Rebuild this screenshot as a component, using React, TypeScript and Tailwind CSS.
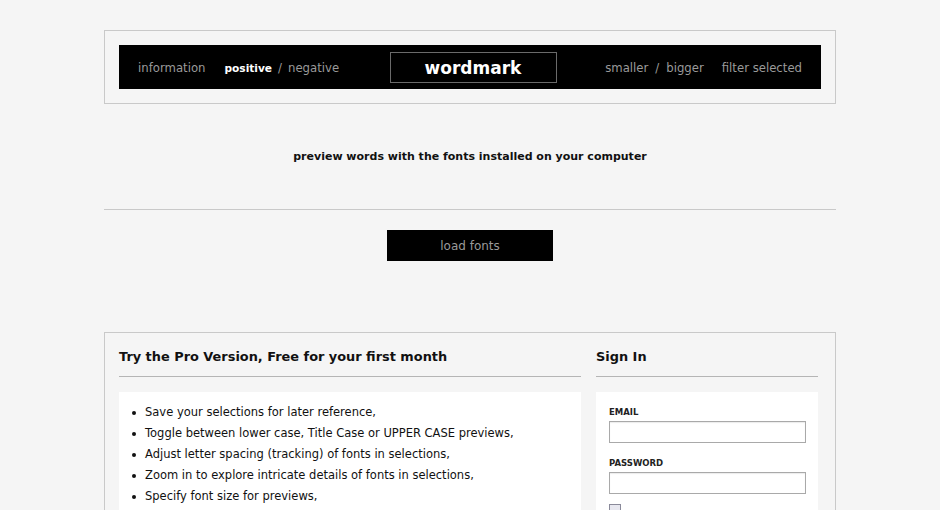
import React from "react";

const font = { fontFamily: '"DejaVu Sans", Verdana, sans-serif' };

export default function App() {
  const items = [
    "Save your selections for later reference,",
    "Toggle between lower case, Title Case or UPPER CASE previews,",
    "Adjust letter spacing (tracking) of fonts in selections,",
    "Zoom in to explore intricate details of fonts in selections,",
    "Specify font size for previews,",
  ];
  return (
    <div className="min-h-screen w-full bg-[#f5f5f5] pt-[30px] text-[#111]" style={font}>
      <div className="mx-auto w-[732px]">
        {/* top box */}
        <div className="border border-[#c9c9c9] p-[14px]">
          <div className="grid h-[44px] grid-cols-[1fr_auto_1fr] items-center bg-black px-[19px] text-[11.7px]">
            <div className="flex items-center pt-[3px]">
              <span className="text-[#9a9a9a]">information</span>
              <span className="ml-[19px] font-bold text-white text-[10.6px]">positive</span>
              <span className="mx-[6px] text-[#9a9a9a]">/</span>
              <span className="text-[#9a9a9a]">negative</span>
            </div>
            <div className="flex h-[31px] w-[167px] translate-x-[3px] items-center justify-center border border-[#6a6a6a] pt-[3px]">
              <span className="text-[17px] font-bold text-white">wordmark</span>
            </div>
            <div className="flex items-center justify-end pt-[3px]">
              <span className="text-[#9a9a9a]">smaller</span>
              <span className="mx-[7px] text-[#9a9a9a]">/</span>
              <span className="text-[#9a9a9a]">bigger</span>
              <span className="ml-[18px] text-[#9a9a9a]">filter selected</span>
            </div>
          </div>
        </div>

        <p className="mt-[46px] text-center text-[11px] font-bold leading-[14px] text-[#111]">
          preview words with the fonts installed on your computer
        </p>

        <div className="mt-[45px] h-px bg-[#c9c9c9]" />

        <div className="mt-[20px] flex justify-center">
          <button className="flex h-[31px] w-[166px] items-center justify-center bg-black text-[12px] text-[#9a9a9a]">
            load fonts
          </button>
        </div>

        {/* bottom box */}
        <div className="mt-[71px] border border-[#c9c9c9] pl-[14px] pr-[16px] pt-[14px]">
          <div className="flex gap-[15px]">
            <div className="w-[462px]">
              <h2 className="border-b border-[#b5b5b5] pb-[9px] text-[12.9px] font-bold leading-[20px]">
                Try the Pro Version, Free for your first month
              </h2>
              <div className="mt-[15px] bg-white pl-[13px] pt-[10px] pb-[20px]">
                <ul>
                  {items.map((t) => (
                    <li key={t} className="flex items-center text-[11.5px] leading-[21px]">
                      <span className="mr-[9px] inline-block h-[4px] w-[4px] rounded-full bg-[#111]" />
                      {t}
                    </li>
                  ))}
                </ul>
              </div>
            </div>
            <div className="w-[222px]">
              <h2 className="border-b border-[#b5b5b5] pb-[9px] text-[12.9px] font-bold leading-[20px]">
                Sign In
              </h2>
              <div className="mt-[15px] bg-white px-[13px] pt-[14px] pb-[20px]">
                <label className="block text-[8.5px] font-bold leading-[12px] text-[#222]">EMAIL</label>
                <div className="mt-[3px] h-[22px] w-[197px] border border-[#a9a9a9] bg-white shadow-[inset_0_1px_1px_rgba(0,0,0,0.08)]" />
                <label className="mt-[14px] block text-[8.5px] font-bold leading-[12px] text-[#222]">PASSWORD</label>
                <div className="mt-[3px] h-[22px] w-[197px] border border-[#a9a9a9] bg-white shadow-[inset_0_1px_1px_rgba(0,0,0,0.08)]" />
                <div className="mt-[10px] flex items-center">
                  <span className="inline-block h-[12px] w-[12px] border border-[#8a8a9a] bg-[#e8e8f0]" />
                </div>
              </div>
            </div>
          </div>
        </div>
      </div>
    </div>
  );
}
